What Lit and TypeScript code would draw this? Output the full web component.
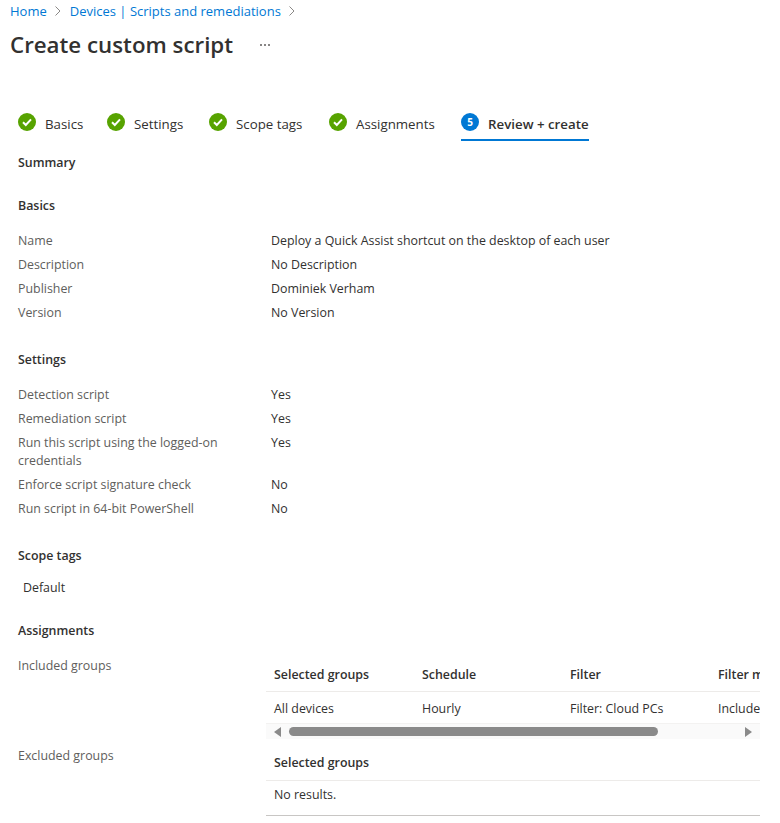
import { LitElement, html, css, svg } from "lit";
import { customElement } from "lit/decorators.js";

const steps = ["Basics", "Settings", "Scope tags", "Assignments"];

const basics = [
  ["Name", "Deploy a Quick Assist shortcut on the desktop of each user"],
  ["Description", "No Description"],
  ["Publisher", "Dominiek Verham"],
  ["Version", "No Version"],
];

const settings = [
  ["Detection script", "Yes"],
  ["Remediation script", "Yes"],
  ["Run this script using the logged-on credentials", "Yes"],
  ["Enforce script signature check", "No"],
  ["Run script in 64-bit PowerShell", "No"],
];

const chevron = svg`<svg class="chev" width="8" height="12" viewBox="0 0 8 12"><path d="M1.5 1.5 6 6l-4.5 4.5" fill="none" stroke="#8a8886" stroke-width="1"/></svg>`;

@customElement("app-root")
class AppRoot extends LitElement {
  static styles = css`
    :host {
      display: block;
      width: 760px;
      height: 823px;
      overflow: hidden;
      background: #fff;
      color: #323130;
      font-family: "Open Sans", "Noto Sans", sans-serif;
      font-size: 12.4px;
      line-height: 18px;
    }
    .crumbs {
      display: flex;
      align-items: center;
      gap: 7.5px;
      height: 22px;
      padding-left: 10px;
      font-size: 13px;
      color: #0078d4;
    }
    .title {
      display: flex;
      align-items: center;
      height: 46px;
      padding-left: 10px;
      font-size: 22.3px;
      font-weight: 600;
      color: #323130;
    }
    .more {
      margin-left: 27px;
      display: flex;
      gap: 2px;
    }
    .more i {
      width: 2px;
      height: 2px;
      border-radius: 50%;
      background: #605e5c;
    }
    .tabs {
      display: flex;
      gap: 25px;
      margin-top: 38px;
      padding-left: 18px;
    }
    .tab {
      display: flex;
      align-items: flex-start;
      gap: 9px;
      height: 35px;
      padding-top: 8px;
      box-sizing: border-box;
      font-size: 13.3px;
      line-height: 20px;
      white-space: nowrap;
    }
    .tab:nth-child(1) {
      width: 64px;
    }
    .tab:nth-child(2) {
      width: 77px;
    }
    .tab:nth-child(3) {
      width: 95px;
    }
    .tab:nth-child(4) {
      width: 107px;
    }
    .tab.active {
      width: 128px;
      border-bottom: 2px solid #0078d4;
      font-weight: 600;
    }
    .tab svg {
      flex: none;
      margin-top: -1px;
    }
    .content {
      padding-left: 18px;
    }
    h3 {
      margin: 0;
      font-size: 12.4px;
      font-weight: 600;
      line-height: 18px;
    }
    .summary {
      margin-top: 13px;
    }
    .heading {
      margin-top: 25px;
      margin-bottom: 14px;
    }
    .row {
      display: grid;
      grid-template-columns: 253px 1fr;
      padding: 3px 0;
    }
    .row .label {
      width: 225px;
      color: #605e5c;
    }
    .settings-heading,
    .tags-heading {
      margin-top: 26px;
    }
    .default {
      padding-left: 5px;
    }
    .assign-heading {
      margin-top: 25px;
    }
    .groups {
      display: grid;
      grid-template-columns: 248px 494px;
    }
    .group-label {
      color: #605e5c;
      padding-top: 3px;
    }
    .table {
      overflow: hidden;
      padding-top: 5px;
    }
    .tr {
      display: grid;
      grid-template-columns: repeat(4, 148px);
      width: 494px;
    }
    .tr > div {
      padding: 7px 8px;
      white-space: nowrap;
    }
    .tr.head {
      height: 33px;
      box-sizing: border-box;
      border-bottom: 1px solid #edebe9;
      font-weight: 600;
    }
    .tr.body {
      height: 32px;
      box-sizing: border-box;
      border-bottom: 1px solid #f3f2f1;
    }
    .tr.body > div {
      padding-top: 8px;
    }
    .scrollbar {
      display: flex;
      align-items: center;
      height: 15px;
      background: #fafafa;
    }
    .thumb {
      width: 369px;
      height: 9px;
      margin-left: 8px;
      border-radius: 5px;
      background: #8a8a8a;
    }
    .arrow {
      width: 0;
      height: 0;
      border-top: 5px solid transparent;
      border-bottom: 5px solid transparent;
    }
    .arrow.left {
      margin-left: 8px;
      border-right: 7px solid #8a8a8a;
    }
    .arrow.right {
      margin-left: 87px;
      border-left: 7px solid #8a8a8a;
    }
    .excluded {
      margin-top: 8px;
    }
    .excluded .group-label {
      padding-top: 0;
    }
    .excluded .table {
      padding-top: 0;
    }
    .tr.single {
      grid-template-columns: 1fr;
    }
    .tr.head.single {
      height: 34px;
    }
    .tr.body.last {
      height: 35px;
      border-bottom: 1px solid #c8c6c4;
    }
    .tr.body.last > div {
      padding-top: 5px;
    }
  `;

  private renderRows(rows: string[][]) {
    return rows.map(
      ([label, value]) => html`
        <div class="row">
          <div class="label">${label}</div>
          <div>${value}</div>
        </div>
      `
    );
  }

  private renderCheck() {
    return html`<svg width="18" height="18" viewBox="0 0 18 18">
      <circle cx="9" cy="9" r="9" fill="#57a300" />
      <path d="M5 9.3 7.8 12 13 6.4" fill="none" stroke="#fff" stroke-width="2" />
    </svg>`;
  }

  render() {
    return html`
      <div class="crumbs">
        <span>Home</span>${chevron}<span>Devices | Scripts and remediations</span>${chevron}
      </div>
      <div class="title">
        Create custom script
        <span class="more"><i></i><i></i><i></i></span>
      </div>
      <div class="tabs">
        ${steps.map((s) => html`<div class="tab">${this.renderCheck()}<span>${s}</span></div>`)}
        <div class="tab active">
          <svg width="18" height="18" viewBox="0 0 18 18">
            <circle cx="9" cy="9" r="9" fill="#0078d4" />
            <text x="9" y="12.5" text-anchor="middle" fill="#fff" font-size="10" font-weight="700">5</text>
          </svg>
          <span>Review + create</span>
        </div>
      </div>
      <div class="content">
        <h3 class="summary">Summary</h3>
        <h3 class="heading">Basics</h3>
        ${this.renderRows(basics)}
        <h3 class="heading settings-heading">Settings</h3>
        ${this.renderRows(settings)}
        <h3 class="heading tags-heading">Scope tags</h3>
        <div class="default">Default</div>
        <h3 class="heading assign-heading">Assignments</h3>
        <div class="groups">
          <div class="group-label">Included groups</div>
          <div class="table">
            <div class="tr head"><div>Selected groups</div><div>Schedule</div><div>Filter</div><div>Filter mode</div></div>
            <div class="tr body"><div>All devices</div><div>Hourly</div><div>Filter: Cloud PCs</div><div>Include</div></div>
            <div class="scrollbar">
              <span class="arrow left"></span>
              <span class="thumb"></span>
              <span class="arrow right"></span>
            </div>
          </div>
        </div>
        <div class="groups excluded">
          <div class="group-label">Excluded groups</div>
          <div class="table">
            <div class="tr head single"><div>Selected groups</div></div>
            <div class="tr body single last"><div>No results.</div></div>
          </div>
        </div>
      </div>
    `;
  }
}
